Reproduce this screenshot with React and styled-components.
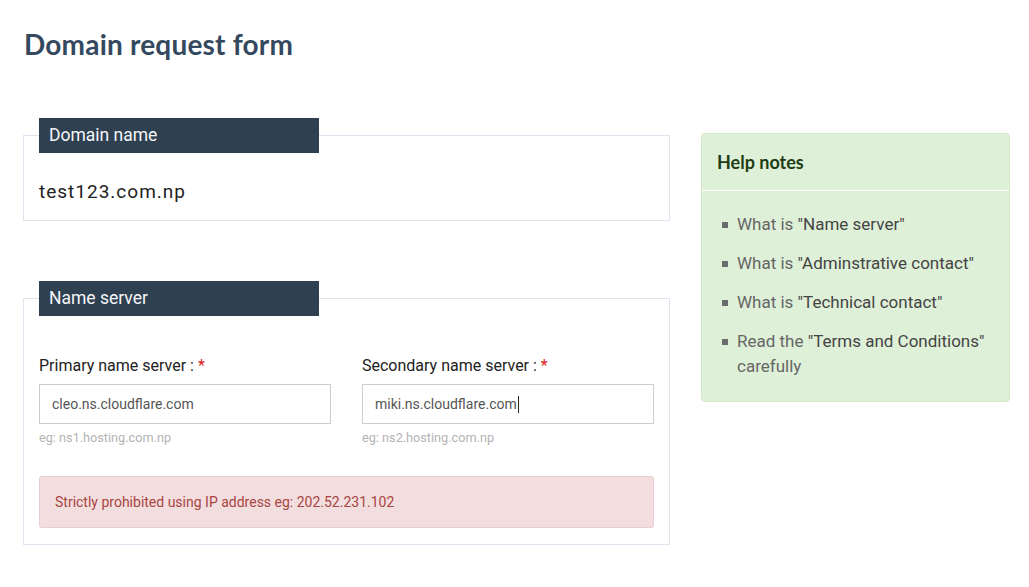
import React from "react";
import styled, { createGlobalStyle } from "styled-components";

const GlobalStyle = createGlobalStyle`
  body {
    margin: 0;
    background: #fff;
    font-family: Roboto, "Liberation Sans", sans-serif;
    color: #333;
  }
`;

const helpNotes = [
  { pre: "What is ", link: '"Name server"' },
  { pre: "What is ", link: '"Adminstrative contact"' },
  { pre: "What is ", link: '"Technical contact"' },
  { pre: "Read the ", link: '"Terms and Conditions"', post: " carefully" },
];

const nameServers = [
  { label: "Primary name server :", value: "cleo.ns.cloudflare.com", hint: "eg: ns1.hosting.com.np" },
  { label: "Secondary name server :", value: "miki.ns.cloudflare.com", hint: "eg: ns2.hosting.com.np", focused: true },
];

const App = () => {
  return (
    <Page>
      <GlobalStyle />
      <Title>Domain request form</Title>
      <Row>
        <Main>
          <Section>
            <Legend>Domain name</Legend>
            <DomainValue>test123.com.np</DomainValue>
          </Section>

          <Section $spaced>
            <Legend>Name server</Legend>
            <FieldGrid>
              {nameServers.map((ns) => (
                <Field key={ns.label}>
                  <Label>
                    {ns.label} <Required>*</Required>
                  </Label>
                  <Input>
                    {ns.value}
                    {ns.focused ? <Caret /> : null}
                  </Input>
                  <Hint>{ns.hint}</Hint>
                </Field>
              ))}
            </FieldGrid>
            <Alert>Strictly prohibited using IP address eg: 202.52.231.102</Alert>
          </Section>
        </Main>

        <Aside>
          <PanelHeading>Help notes</PanelHeading>
          <NoteList>
            {helpNotes.map((note) => (
              <Note key={note.link}>
                {note.pre}
                <NoteLink>{note.link}</NoteLink>
                {note.post}
              </Note>
            ))}
          </NoteList>
        </Aside>
      </Row>
    </Page>
  );
};

const Page = styled.div`
  padding: 0 0 0 23px;
`;

const Title = styled.h1`
  margin: 0;
  padding: 26px 0 0 1px;
  height: 118px;
  box-sizing: border-box;
  font-family: Lato, "DejaVu Sans", sans-serif;
  font-weight: 700;
  font-size: 28px;
  line-height: 36px;
  letter-spacing: 0.2px;
  color: #34495e;
`;

const Row = styled.div`
  display: flex;
  align-items: flex-start;
`;

const Main = styled.div`
  width: 647px;
  flex-shrink: 0;
`;

const Section = styled.fieldset`
  margin: ${(p) => (p.$spaced ? "60px" : "0")} 0 0;
  padding: 0 15px 16px;
  border: 1px solid #dde6ee;
  min-width: 0;
`;

const Legend = styled.legend`
  box-sizing: border-box;
  width: 280px;
  height: 35px;
  padding: 0 10px;
  background: #2f4051;
  color: #f4f6f8;
  font-size: 17.5px;
  font-weight: 400;
  line-height: 35px;
`;

const DomainValue = styled.div`
  margin-top: 27px;
  margin-bottom: 0;
  font-size: 19px;
  line-height: 24px;
  letter-spacing: 1px;
  color: #222;
`;

const FieldGrid = styled.div`
  display: grid;
  grid-template-columns: 1fr 1fr;
  column-gap: 31px;
  padding-top: 40px;
`;

const Field = styled.div`
  display: flex;
  flex-direction: column;
`;

const Label = styled.label`
  font-size: 16px;
  line-height: 20px;
  color: #222;
  margin-bottom: 8px;
`;

const Required = styled.span`
  color: #e21a1a;
`;

const Input = styled.div`
  box-sizing: border-box;
  height: 40px;
  padding: 0 12px;
  border: 1px solid #cccccc;
  font-size: 14px;
  line-height: 38px;
  color: #555;
  display: flex;
  align-items: center;
`;

const Caret = styled.span`
  display: inline-block;
  width: 1px;
  height: 17px;
  background: #222;
  margin-left: 1px;
`;

const Hint = styled.div`
  margin-top: 6px;
  font-size: 12.7px;
  line-height: 16px;
  color: #b3b3b3;
`;

const Alert = styled.div`
  margin-top: 30px;
  box-sizing: border-box;
  height: 52px;
  padding: 0 15px;
  border: 1px solid #ebccd1;
  border-radius: 3px;
  background: #f2dede;
  color: #a94442;
  font-size: 14px;
  line-height: 50px;
`;

const Aside = styled.aside`
  width: 309px;
  flex-shrink: 0;
  margin: 15px 0 0 31px;
  box-sizing: border-box;
  background: #dff0d8;
  border: 1px solid #d6e9c6;
  border-radius: 4px;
`;

const PanelHeading = styled.h3`
  margin: 0;
  padding: 0 15px;
  height: 56px;
  border-bottom: 1px solid #fff;
  font-family: Lato, "DejaVu Sans", sans-serif;
  font-weight: 700;
  font-size: 18px;
  line-height: 56px;
  color: #1e3d14;
`;

const NoteList = styled.ul`
  list-style: none;
  margin: 0;
  padding: 21px 15px 22px 35px;
`;

const Note = styled.li`
  position: relative;
  font-size: 17px;
  line-height: 25px;
  color: #666;
  & + & {
    margin-top: 14px;
  }
  &::before {
    content: "";
    position: absolute;
    left: -15px;
    top: 10px;
    width: 6px;
    height: 6px;
    background: #6b6b6b;
  }
`;

const NoteLink = styled.span`
  color: #444;
`;

export default App;
